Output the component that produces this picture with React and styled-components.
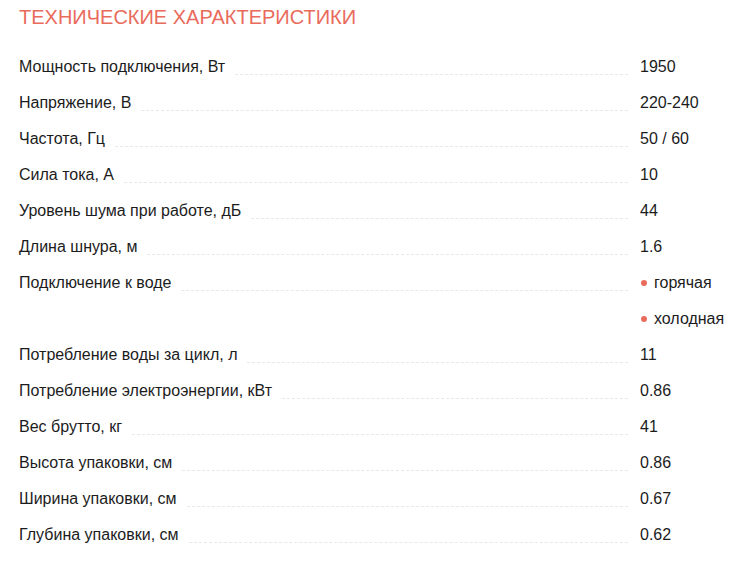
import React from 'react';
import styled, { createGlobalStyle } from 'styled-components';

const GlobalStyle = createGlobalStyle`
  body {
    margin: 0;
    background: #ffffff;
    font-family: "Liberation Sans", Arial, sans-serif;
    color: #1c1c1c;
  }
`;

const Page = styled.div`
  padding: 0 0 0 19px;
`;

const Title = styled.h2`
  margin: 0 0 15px;
  font-size: 20px;
  line-height: 34px;
  font-weight: 400;
  text-transform: uppercase;
  color: #e96b5c;
`;

const Table = styled.div`
  display: grid;
  grid-template-columns: 609px 1fr;
  column-gap: 12px;
  align-items: start;
`;

const Name = styled.div`
  display: flex;
  font-size: 16px;
  line-height: 36px;
`;

const Dots = styled.span`
  flex: 1;
  height: 25px;
  margin-left: 10px;
  border-bottom: 1px dashed #e8e8e8;
`;

const Values = styled.div`
  display: flex;
  flex-direction: column;
`;

const Value = styled.div`
  display: flex;
  align-items: center;
  font-size: 16px;
  line-height: 36px;
  white-space: nowrap;
`;

const Bullet = styled.span`
  width: 6px;
  height: 6px;
  margin: 0 7px 0 1px;
  border-radius: 50%;
  background: #e96b5c;
`;

const specs = [
  ['Мощность подключения, Вт', ['1950']],
  ['Напряжение, В', ['220-240']],
  ['Частота, Гц', ['50 / 60']],
  ['Сила тока, А', ['10']],
  ['Уровень шума при работе, дБ', ['44']],
  ['Длина шнура, м', ['1.6']],
  ['Подключение к воде', ['горячая', 'холодная'], true],
  ['Потребление воды за цикл, л', ['11']],
  ['Потребление электроэнергии, кВт', ['0.86']],
  ['Вес брутто, кг', ['41']],
  ['Высота упаковки, см', ['0.86']],
  ['Ширина упаковки, см', ['0.67']],
  ['Глубина упаковки, см', ['0.62']],
];

export default function App() {
  return (
    <Page>
      <GlobalStyle />
      <Title>Технические характеристики</Title>
      <Table>
        {specs.map(([name, values, list]) => (
          <React.Fragment key={name}>
            <Name>
              {name}
              <Dots />
            </Name>
            <Values>
              {values.map((v) => (
                <Value key={v}>
                  {list && <Bullet />}
                  {v}
                </Value>
              ))}
            </Values>
          </React.Fragment>
        ))}
      </Table>
    </Page>
  );
}
